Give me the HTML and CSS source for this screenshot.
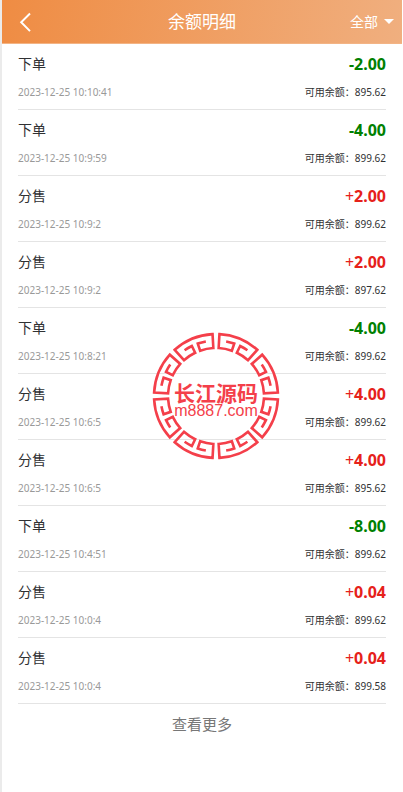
FILE: index.html
```
<!DOCTYPE html>
<html lang="zh-CN">
<head>
<meta charset="utf-8">
<meta name="viewport" content="width=device-width, initial-scale=1">
<title>余额明细</title>
<link rel="stylesheet" href="styles.css">
</head>
<body>
<div class="page">
  <header class="bar">
    <button class="back" type="button" aria-label="返回">
      <svg width="14" height="20" viewBox="0 0 14 20"><path d="M12 1.500 3.200 10.300l8.800 8.800"/></svg>
    </button>
    <h1 class="title">余额明细</h1>
    <button class="filter" type="button">全部<span class="caret"></span></button>
  </header>
  <main>
    <ul class="list">
      <li class="item"><span class="kind">下单</span><span class="amount out">-2.00</span><time class="time">2023-12-25 10:10:41</time><span class="left">可用余额：895.62</span></li>
      <li class="item"><span class="kind">下单</span><span class="amount out">-4.00</span><time class="time">2023-12-25 10:9:59</time><span class="left">可用余额：899.62</span></li>
      <li class="item"><span class="kind">分售</span><span class="amount in"><span class="plus">+</span>2.00</span><time class="time">2023-12-25 10:9:2</time><span class="left">可用余额：899.62</span></li>
      <li class="item"><span class="kind">分售</span><span class="amount in"><span class="plus">+</span>2.00</span><time class="time">2023-12-25 10:9:2</time><span class="left">可用余额：897.62</span></li>
      <li class="item"><span class="kind">下单</span><span class="amount out">-4.00</span><time class="time">2023-12-25 10:8:21</time><span class="left">可用余额：899.62</span></li>
      <li class="item"><span class="kind">分售</span><span class="amount in"><span class="plus">+</span>4.00</span><time class="time">2023-12-25 10:6:5</time><span class="left">可用余额：899.62</span></li>
      <li class="item"><span class="kind">分售</span><span class="amount in"><span class="plus">+</span>4.00</span><time class="time">2023-12-25 10:6:5</time><span class="left">可用余额：895.62</span></li>
      <li class="item"><span class="kind">下单</span><span class="amount out">-8.00</span><time class="time">2023-12-25 10:4:51</time><span class="left">可用余额：899.62</span></li>
      <li class="item"><span class="kind">分售</span><span class="amount in"><span class="plus">+</span>0.04</span><time class="time">2023-12-25 10:0:4</time><span class="left">可用余额：899.62</span></li>
      <li class="item"><span class="kind">分售</span><span class="amount in"><span class="plus">+</span>0.04</span><time class="time">2023-12-25 10:0:4</time><span class="left">可用余额：899.58</span></li>
    </ul>
    <button class="more" type="button">查看更多</button>
  </main>
  <div class="seal">
    <svg width="128" height="128" viewBox="-64 -64 128 128">
      <defs>
        <path id="fret" d="M54.300 11.500A55.500 55.500 0 0 0 55.400 3.200L47.900 2.700A48 48 0 0 1 45.300 15.900L58.500 20.500A62 62 0 0 0 58.500-20.500L45.300-15.900A48 48 0 0 1 47.900-2.700L55.400-3.200A55.500 55.500 0 0 0 54.300-11.500"/>
      </defs>
      <g class="ring">
        <use href="#fret" transform="rotate(22.500)"/>
        <use href="#fret" transform="rotate(67.500)"/>
        <use href="#fret" transform="rotate(112.500)"/>
        <use href="#fret" transform="rotate(157.500)"/>
        <use href="#fret" transform="rotate(202.500)"/>
        <use href="#fret" transform="rotate(247.500)"/>
        <use href="#fret" transform="rotate(292.500)"/>
        <use href="#fret" transform="rotate(337.500)"/>
      </g>
      <text class="seal-name" x="0" y="5">长江源码</text>
      <text class="seal-site" x="0" y="20">m8887.com</text>
    </svg>
  </div>
</div>
</body>
</html>
```
FILE: styles.css
```
* {
  box-sizing: border-box;
}

body {
  margin: 0;
  background: #fff;
  color: #303133;
  font-family: "Noto Sans", "Noto Sans CJK SC", sans-serif;
}

button {
  border: 0;
  padding: 0;
  background: none;
  color: inherit;
  font: inherit;
}

.page {
  position: relative;
  min-height: 100vh;
  margin-right: 1px;
  border-left: 2px solid #ebebeb;
}

.bar {
  display: grid;
  grid-template-columns: 1fr auto 1fr;
  align-items: center;
  height: 44px;
  padding: 0 8px;
  border-bottom: 1px solid #f3b485;
  background: linear-gradient(100deg, #ef8c43, #f0af7f);
  color: #fff;
}

.back {
  justify-self: start;
  padding-left: 8px;
}

.back svg {
  display: block;
  fill: none;
  stroke: #fff;
  stroke-width: 2;
}

.title {
  margin: 0;
  font-size: 17px;
  font-weight: 400;
  line-height: 24px;
}

.filter {
  display: flex;
  align-items: center;
  justify-self: end;
  gap: 6px;
  font-size: 14px;
  line-height: 24px;
}

.caret {
  border: 5px solid transparent;
  border-top-color: #fff;
  border-bottom: 0;
}

.list {
  margin: 0;
  padding: 0 16px;
  list-style: none;
}

.item {
  display: grid;
  grid-template-columns: 1fr auto;
  row-gap: 8px;
  align-items: center;
  padding: 8px 0;
  border-bottom: 1px solid #e4e4e4;
}

.kind {
  font-size: 14px;
  line-height: 24px;
}

.amount {
  font-size: 16px;
  font-weight: 700;
  line-height: 24px;
  text-align: right;
}

.out {
  color: #008000;
}

.in {
  color: #e6211a;
}

.plus {
  font-weight: 400;
}

.time,
.left {
  font-size: 10px;
  line-height: 17px;
}

.time {
  color: #999;
}

.left {
  text-align: right;
}

.more {
  display: block;
  width: 100%;
  padding: 8px 0;
  color: #777;
  font-size: 15px;
  line-height: 24px;
}

.seal {
  position: absolute;
  top: 50vh;
  left: 50%;
  margin: -64px 0 0 -50px;
  pointer-events: none;
}

.seal svg {
  display: block;
}

.ring {
  fill: none;
  stroke: #f43f4a;
  stroke-width: 2.600;
}

.seal text {
  fill: #f43f4a;
  text-anchor: middle;
}

.seal-name {
  font-size: 21px;
  font-weight: 700;
}

.seal-site {
  font-family: "Liberation Sans", sans-serif;
  font-size: 16px;
}
```
